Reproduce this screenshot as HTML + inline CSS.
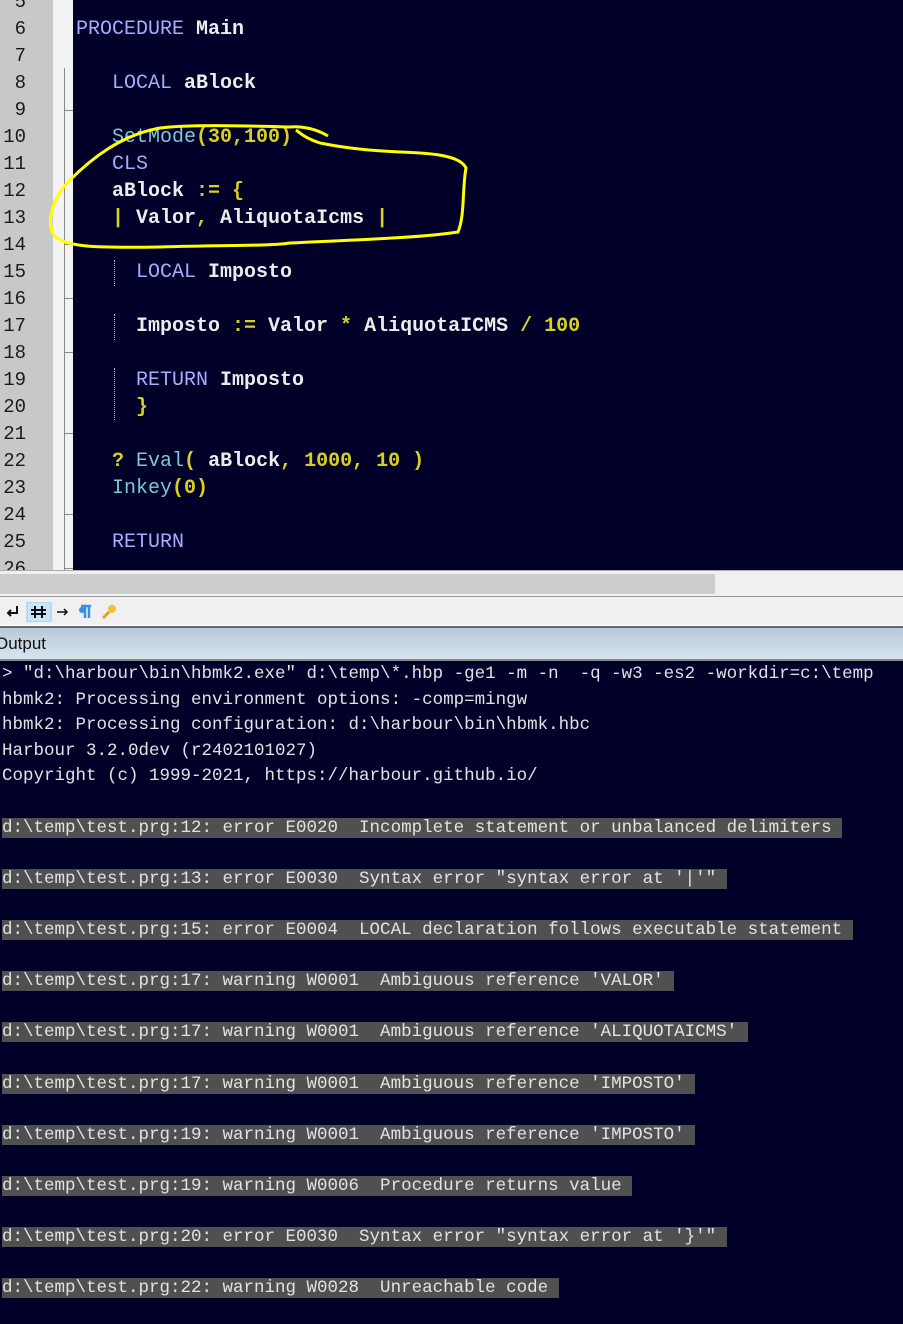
<!DOCTYPE html>
<html><head><meta charset="utf-8"><style>
*{margin:0;padding:0;box-sizing:border-box}
body{width:903px;height:1324px;overflow:hidden;background:#000028;position:relative;font-family:"Liberation Mono",monospace}
#gut{position:absolute;left:0;top:0;width:53px;height:570px;background:#c8c8c8}
#mar{position:absolute;left:53px;top:0;width:20px;height:570px;background:#f3f3f3}
#fold{position:absolute;left:64px;top:68px;width:1px;height:502px;background:#888}
.tick{position:absolute;left:64px;width:9px;height:1px;background:#888}
.ln{position:absolute;left:0;width:26px;text-align:right;font-size:19px;color:#1a1a1a;line-height:27px;height:27px}
.cl{position:absolute;font-size:20px;line-height:27px;height:27px;white-space:pre;color:#ececec;font-weight:bold}
.k{color:#a8acff;font-weight:normal}.y{color:#d8d020}.c{color:#7cc8d8;font-weight:normal}
.dot{position:absolute;left:114px;width:0;border-left:1px dotted #bbb}
#sb{position:absolute;left:0;top:570px;width:903px;height:26px;background:#f0f0f0;border-top:1px solid #aaa}
#thumb{position:absolute;left:0;top:3px;width:715px;height:20px;background:#cdcdcd}
#tb{position:absolute;left:0;top:596px;width:903px;height:30px;background:#f0f0f0;border-top:1px solid #999;border-bottom:1px solid #fff}
#hdr{position:absolute;left:0;top:626px;width:903px;height:35px;background:linear-gradient(#b8c8d8,#d8e4f0);border-top:2px solid #666;border-bottom:2px solid #888;font-family:"Liberation Sans",sans-serif;font-size:17px;color:#111;padding:6px 0 0 0;text-indent:-5px}
#out{position:absolute;left:2px;top:662px;font-size:17.5px;line-height:25.6px;color:#e2e2e2;white-space:pre}
.h{background:#505050}
</style></head><body>
<div id="gut"></div><div id="mar"></div><div id="fold"></div>
<div class="tick" style="top:110px"></div><div class="tick" style="top:244px"></div><div class="tick" style="top:298px"></div><div class="tick" style="top:352px"></div><div class="tick" style="top:433px"></div><div class="tick" style="top:514px"></div><div class="tick" style="top:568px"></div>
<div class="ln" style="top:-11px">5</div><div class="ln" style="top:16px">6</div><div class="ln" style="top:43px">7</div><div class="ln" style="top:70px">8</div><div class="ln" style="top:97px">9</div><div class="ln" style="top:124px">10</div><div class="ln" style="top:151px">11</div><div class="ln" style="top:178px">12</div><div class="ln" style="top:205px">13</div><div class="ln" style="top:232px">14</div><div class="ln" style="top:259px">15</div><div class="ln" style="top:286px">16</div><div class="ln" style="top:313px">17</div><div class="ln" style="top:340px">18</div><div class="ln" style="top:367px">19</div><div class="ln" style="top:394px">20</div><div class="ln" style="top:421px">21</div><div class="ln" style="top:448px">22</div><div class="ln" style="top:475px">23</div><div class="ln" style="top:502px">24</div><div class="ln" style="top:529px">25</div><div class="ln" style="top:556px">26</div>
<div class="dot" style="top:260px;height:26px"></div><div class="dot" style="top:314px;height:26px"></div><div class="dot" style="top:368px;height:52px"></div>
<div class="cl" style="left:76px;top:16px"><span class="k">PROCEDURE</span> Main</div>
<div class="cl" style="left:112px;top:70px"><span class="k">LOCAL</span> aBlock</div>
<div class="cl" style="left:112px;top:124px"><span class="c">SetMode</span><span class="y">(30,100)</span></div>
<div class="cl" style="left:112px;top:151px"><span class="k">CLS</span></div>
<div class="cl" style="left:112px;top:178px">aBlock <span class="y">:= {</span></div>
<div class="cl" style="left:112px;top:205px"><span class="y">|</span> Valor<span class="y">,</span> AliquotaIcms <span class="y">|</span></div>
<div class="cl" style="left:136px;top:259px"><span class="k">LOCAL</span> Imposto</div>
<div class="cl" style="left:136px;top:313px">Imposto <span class="y">:=</span> Valor <span class="y">*</span> AliquotaICMS <span class="y">/ 100</span></div>
<div class="cl" style="left:136px;top:367px"><span class="k">RETURN</span> Imposto</div>
<div class="cl" style="left:136px;top:394px"><span class="y">}</span></div>
<div class="cl" style="left:112px;top:448px"><span class="y">?</span> <span class="c">Eval</span><span class="y">(</span> aBlock<span class="y">, 1000, 10 )</span></div>
<div class="cl" style="left:112px;top:475px"><span class="c">Inkey</span><span class="y">(0)</span></div>
<div class="cl" style="left:112px;top:529px"><span class="k">RETURN</span></div>
<svg style="position:absolute;left:0;top:0" width="903" height="570"><path d="M328,136 C315,128 300,126 290,127 C250,126 190,124 160,128 C120,135 90,160 70,180 C55,195 47,215 52,232 C58,248 100,248 160,247 C230,245 270,246 290,243 C350,240 420,238 458,232 C465,215 462,190 466,168 C460,155 430,153 400,152 C360,150 340,147 320,143 C305,138 300,133 296,130" fill="none" stroke="#ffff00" stroke-width="3"/></svg>
<div id="sb"><div id="thumb"></div></div>
<div id="tb">
<svg style="position:absolute;left:3px;top:5px" width="120" height="20">
<path d="M14,4 V11 H5 M8,8 L5,11 L8,14" stroke="#111" stroke-width="2" fill="none"/>
<rect x="24" y="0" width="24" height="20" fill="#cce4f7" stroke="#99c9ef"/>
<path d="M32,4 V16 M39,4 V16 M28,8 H43 M28,12 H43" stroke="#111" stroke-width="2"/>
<path d="M54,10 H64 M61,7 L64,10 L61,13" stroke="#111" stroke-width="1.5" fill="none"/>
<path d="M78,4 H88 M82,4 V16 M86,4 V16" stroke="#3a8ee6" stroke-width="2.5"/><circle cx="79" cy="8" r="3" fill="#3a8ee6"/>
<circle cx="109" cy="7" r="4" fill="#f0c030"/><path d="M106,10 L100,16" stroke="#e0a020" stroke-width="3"/>
</svg></div>
<div id="hdr">Output</div>
<div id="out">&gt; "d:\harbour\bin\hbmk2.exe" d:\temp\*.hbp -ge1 -m -n  -q -w3 -es2 -workdir=c:\temp
hbmk2: Processing environment options: -comp=mingw
hbmk2: Processing configuration: d:\harbour\bin\hbmk.hbc
Harbour 3.2.0dev (r2402101027)
Copyright (c) 1999-2021, https://harbour.github.io/

<span class="h">d:\temp\test.prg:12: error E0020  Incomplete statement or unbalanced delimiters </span>

<span class="h">d:\temp\test.prg:13: error E0030  Syntax error "syntax error at '|'" </span>

<span class="h">d:\temp\test.prg:15: error E0004  LOCAL declaration follows executable statement </span>

<span class="h">d:\temp\test.prg:17: warning W0001  Ambiguous reference 'VALOR' </span>

<span class="h">d:\temp\test.prg:17: warning W0001  Ambiguous reference 'ALIQUOTAICMS' </span>

<span class="h">d:\temp\test.prg:17: warning W0001  Ambiguous reference 'IMPOSTO' </span>

<span class="h">d:\temp\test.prg:19: warning W0001  Ambiguous reference 'IMPOSTO' </span>

<span class="h">d:\temp\test.prg:19: warning W0006  Procedure returns value </span>

<span class="h">d:\temp\test.prg:20: error E0030  Syntax error "syntax error at '}'" </span>

<span class="h">d:\temp\test.prg:22: warning W0028  Unreachable code </span></div>
</body></html>
